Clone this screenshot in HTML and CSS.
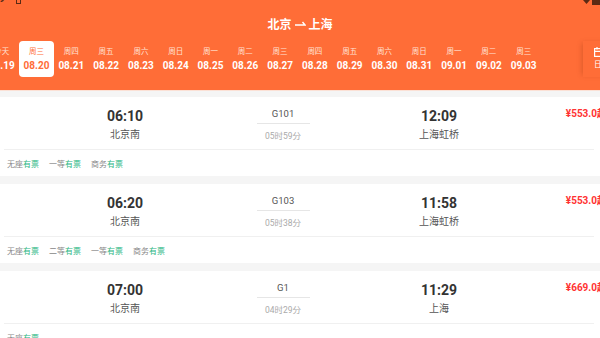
FILE: index.html
```html
<!DOCTYPE html>
<html lang="zh-CN">
<head>
  <meta charset="UTF-8" />
  <meta name="viewport" content="width=device-width, initial-scale=1.0"/>
  <title>北京 - 上海</title>
  <link rel="stylesheet" href="styles.css">
</head>
<body>
  <div class="page">
    <header class="top">
      <div class="status">
        <span class="status-time">9</span>
        <span class="status-note"></span>
        <svg class="status-icons" width="18" height="6" viewBox="0 0 18 6">
          <polygon points="0,0 7,0 3.5,4" fill="#5b2a14"/>
          <rect x="9" y="0" width="9" height="5" fill="#5b2a14"/>
        </svg>
      </div>
      <h1 class="route">北京 <svg class="route-arrow" width="11" height="7" viewBox="0 0 11 7"><path d="M0 5H10L7.5 2" fill="none" stroke="#fff" stroke-width="1.4"/></svg> 上海</h1>
      <div class="dates-bar">
        <div class="dates">
          <div class="dates-track">
            <div class="day"><span class="wk">今天</span><span class="dt">08.19</span></div>
            <div class="day active"><span class="wk">周三</span><span class="dt">08.20</span></div>
            <div class="day"><span class="wk">周四</span><span class="dt">08.21</span></div>
            <div class="day"><span class="wk">周五</span><span class="dt">08.22</span></div>
            <div class="day"><span class="wk">周六</span><span class="dt">08.23</span></div>
            <div class="day"><span class="wk">周日</span><span class="dt">08.24</span></div>
            <div class="day"><span class="wk">周一</span><span class="dt">08.25</span></div>
            <div class="day"><span class="wk">周二</span><span class="dt">08.26</span></div>
            <div class="day"><span class="wk">周三</span><span class="dt">08.27</span></div>
            <div class="day"><span class="wk">周四</span><span class="dt">08.28</span></div>
            <div class="day"><span class="wk">周五</span><span class="dt">08.29</span></div>
            <div class="day"><span class="wk">周六</span><span class="dt">08.30</span></div>
            <div class="day"><span class="wk">周日</span><span class="dt">08.31</span></div>
            <div class="day"><span class="wk">周一</span><span class="dt">09.01</span></div>
            <div class="day"><span class="wk">周二</span><span class="dt">09.02</span></div>
            <div class="day"><span class="wk">周三</span><span class="dt">09.03</span></div>
          </div>
        </div>
        <div class="cal-btn">
          <svg width="11" height="10" viewBox="0 0 11 10">
            <rect x="0.6" y="1.6" width="9.8" height="7.8" fill="none" stroke="#fff" stroke-width="1.2"/>
            <path d="M0.6 4.3H10.4M3 0V2.5M8 0V2.5" stroke="#fff" stroke-width="1.2"/>
          </svg>
          <span>日历</span>
        </div>
      </div>
    </header>

    <main class="list">
      <div class="train">
        <div class="train-main">
          <div class="stop"><div class="time">06:10</div><div class="station">北京南</div></div>
          <div class="mid"><div class="code">G101</div><div class="line"></div><div class="dur">05时59分</div></div>
          <div class="stop"><div class="time">12:09</div><div class="station">上海虹桥</div></div>
          <div class="price">¥553.0起</div>
        </div>
        <div class="seats">
          <span class="seat">无座<em>有票</em></span>
          <span class="seat">一等<em>有票</em></span>
          <span class="seat">商务<em>有票</em></span>
        </div>
      </div>

      <div class="train">
        <div class="train-main">
          <div class="stop"><div class="time">06:20</div><div class="station">北京南</div></div>
          <div class="mid"><div class="code">G103</div><div class="line"></div><div class="dur">05时38分</div></div>
          <div class="stop"><div class="time">11:58</div><div class="station">上海虹桥</div></div>
          <div class="price">¥553.0起</div>
        </div>
        <div class="seats">
          <span class="seat">无座<em>有票</em></span>
          <span class="seat">二等<em>有票</em></span>
          <span class="seat">一等<em>有票</em></span>
          <span class="seat">商务<em>有票</em></span>
        </div>
      </div>

      <div class="train">
        <div class="train-main">
          <div class="stop"><div class="time">07:00</div><div class="station">北京南</div></div>
          <div class="mid"><div class="code">G1</div><div class="line"></div><div class="dur">04时29分</div></div>
          <div class="stop"><div class="time">11:29</div><div class="station">上海</div></div>
          <div class="price">¥669.0起</div>
        </div>
        <div class="seats">
          <span class="seat">无座<em>有票</em></span>
        </div>
      </div>
    </main>
  </div>
</body>
</html>
```

FILE: styles.css
```css
html, body {
  margin: 0;
  padding: 0;
  overflow: hidden;
  background: #f5f5f5;
}
body {
  font-family: Roboto, "Noto Sans CJK SC", sans-serif;
  color: #333;
}
.page {
  width: 620px;
}
.top {
  height: 90px;
  background: #ff6d37;
  border-bottom: 1px solid #fbe1d6;
  color: #fff;
}
.status {
  display: flex;
  height: 6px;
  overflow: hidden;
}
.status-time {
  font-size: 10px;
  font-weight: bold;
  line-height: 10px;
  margin-top: -6px;
  margin-left: -1px;
  color: #5b2a14;
}
.status-note {
  width: 5px;
  height: 6px;
  margin-left: 11px;
  margin-top: -2px;
  box-sizing: border-box;
  border: 1.5px solid #5b2a14;
}
.status-icons {
  margin-left: auto;
  margin-right: 19px;
}
.route {
  margin: 6px 0 0;
  height: 26px;
  line-height: 26px;
  font-size: 12px;
  font-weight: bold;
  text-align: center;
  width: 600px;
}
.route-arrow {
  vertical-align: 2px;
}
.dates-bar {
  display: flex;
  margin-top: 3px;
  height: 36px;
}
.dates {
  flex: 1;
  overflow: hidden;
}
.dates-track {
  display: flex;
  margin-left: -15.7px;
}
.day {
  flex: none;
  width: 34.8px;
  height: 36px;
  box-sizing: border-box;
  padding-top: 5px;
  display: flex;
  flex-direction: column;
  align-items: center;
  border-radius: 4px;
}
.day .wk {
  font-size: 7.5px;
  line-height: 12px;
  color: #ffe3d6;
}
.day .dt {
  font-size: 10px;
  font-weight: bold;
  line-height: 14px;
  margin-top: 1px;
}
.day.active {
  background: #fff;
}
.day.active .wk,
.day.active .dt {
  color: #ff6d37;
}
.cal-btn {
  flex: none;
  width: 37px;
  box-sizing: border-box;
  padding: 6px 0 0 11px;
  display: flex;
  flex-direction: column;
  align-items: flex-start;
  box-shadow: -3px 0 5px -2px rgba(120, 40, 0, 0.25);
}
.cal-btn span {
  font-size: 7.5px;
  line-height: 10px;
  margin-top: 3px;
}
.list {
  padding-top: 6px;
}
.train {
  background: #fff;
  margin-bottom: 8px;
}
.train-main {
  display: grid;
  grid-template-columns: 156px 156px 156px 1fr;
  padding: 10px 0 6px 45px;
  border-bottom: 1px solid #f0f0f0;
  margin-right: 26px;
  margin-left: 4px;
}
.train-main .stop:first-child {
  margin-left: -4px;
}
.stop {
  text-align: center;
}
.time {
  font-size: 14px;
  font-weight: bold;
  line-height: 18px;
  color: #333;
}
.station {
  font-size: 10px;
  line-height: 14px;
  margin-top: 3px;
  color: #555;
}
.mid {
  display: flex;
  flex-direction: column;
  align-items: center;
}
.code {
  font-size: 9.5px;
  line-height: 14px;
  color: #555;
}
.line {
  width: 53px;
  height: 1px;
  margin-top: 2px;
  background: #e6e6e6;
}
.dur {
  font-size: 8.5px;
  line-height: 13px;
  margin-top: 6px;
  color: #aaa;
}
.price {
  text-align: right;
  font-size: 10px;
  font-weight: bold;
  line-height: 14px;
  color: #ff3333;
  white-space: nowrap;
  margin-right: -13px;
}
.seats {
  display: flex;
  gap: 10px;
  height: 26px;
  align-items: center;
  padding-left: 7px;
}
.seat {
  font-size: 8px;
  color: #888;
}
.seat em {
  font-style: normal;
  color: #2db784;
}
```
